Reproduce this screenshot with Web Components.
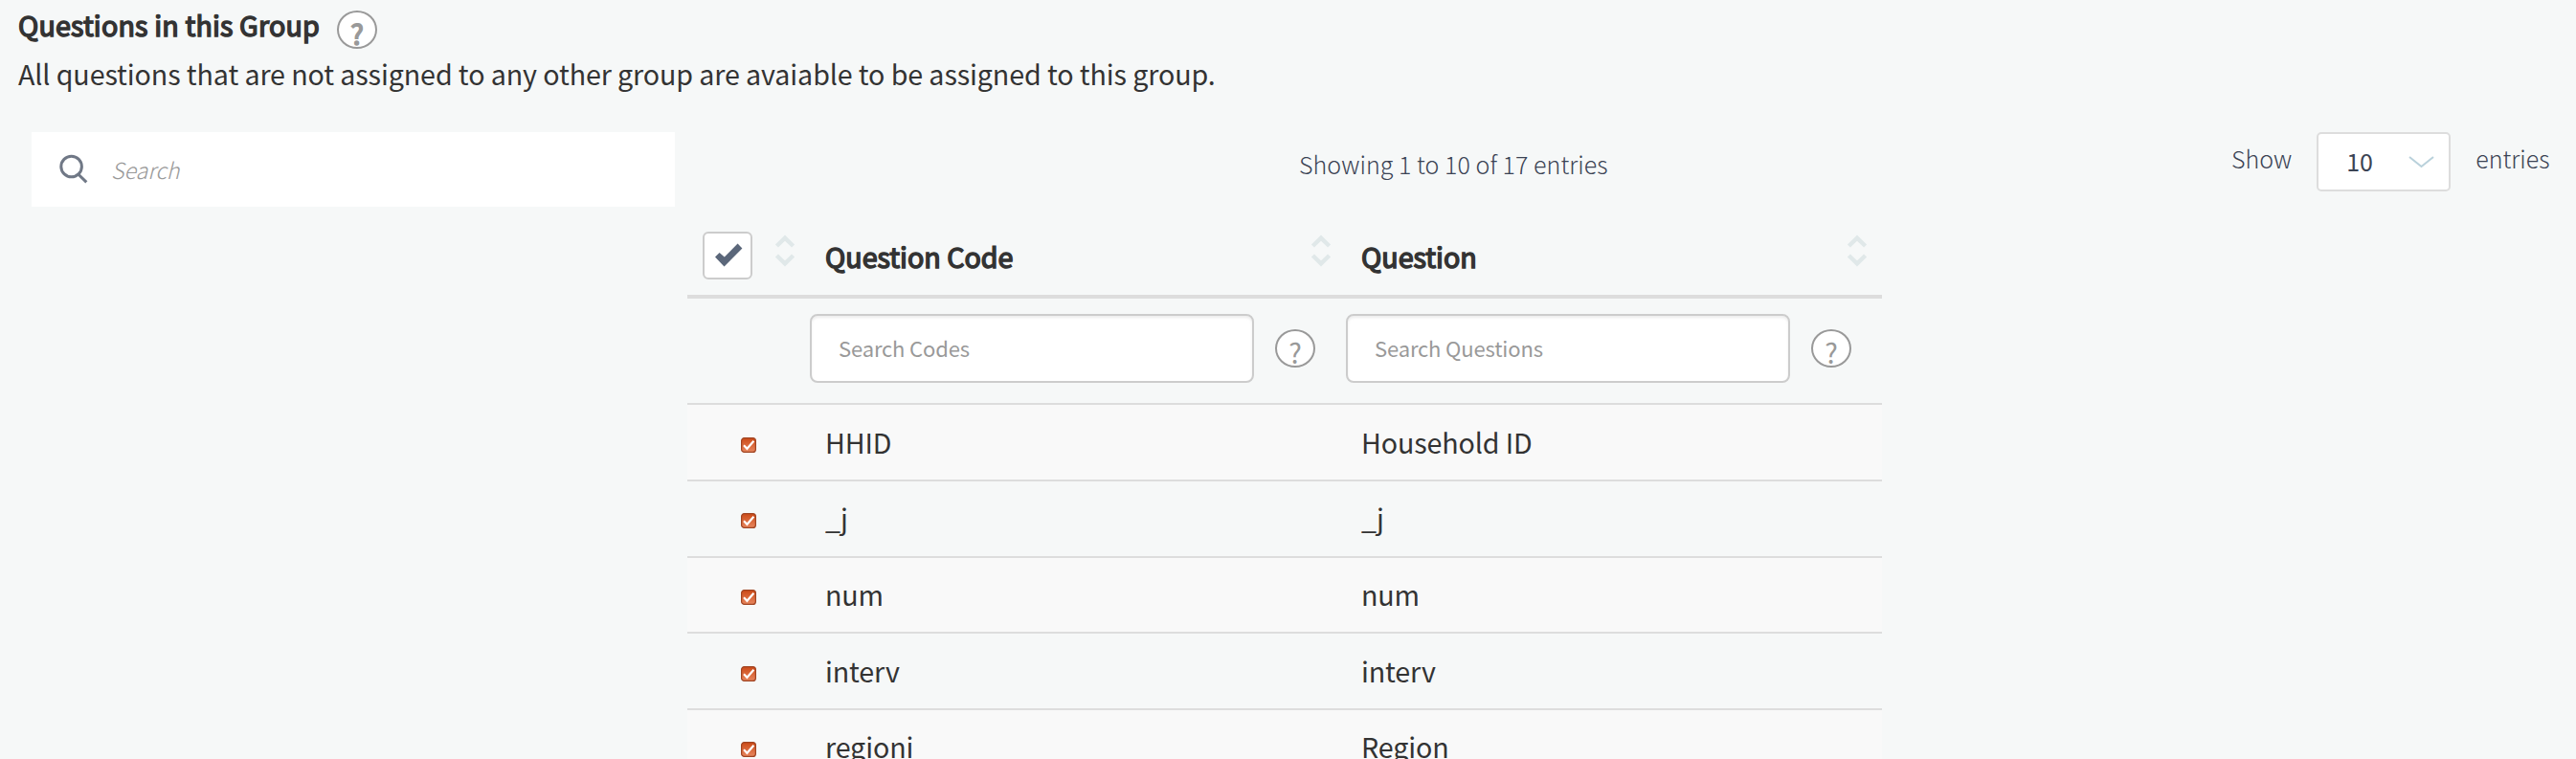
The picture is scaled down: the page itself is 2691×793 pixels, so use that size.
<!DOCTYPE html>
<html lang="en">
<head>
<meta charset="utf-8">
<title>Questions in this Group</title>
<style>
body { margin: 0; background: #f6f8f8; color: #333; font-family: "Noto Sans CJK SC", "Noto Sans", sans-serif; font-size: 28.65px; overflow: hidden; }
</style>
</head>
<body>
<group-editor></group-editor>
<script>
const define = (name, html, setup) => customElements.define(name, class extends HTMLElement {
  connectedCallback() {
    if (this.shadowRoot) return;
    const t = document.createElement('template');
    t.innerHTML = html;
    const root = this.attachShadow({ mode: 'open' });
    root.append(t.content.cloneNode(true));
    if (setup) setup(this, root);
  }
});

define('help-badge', `<style>
  :host { display: flex; box-sizing: border-box; flex: none; width: 42px; height: 40px; border: 2px solid #999; border-radius: 21px / 20px; background: #fff; color: #999; justify-content: center; }
  span { line-height: 40px; margin-top: 1.5px; }
  :host([strong]) span { -webkit-text-stroke: 1.5px #999; }
</style><span>?</span>`);

define('group-heading', `<style>
  :host { display: block; height: 138px; padding: 0 0 0 19px; box-sizing: border-box; }
  .title { display: flex; height: 56px; gap: 18px; }
  h3 { margin: 8px 0 0; font-size: inherit; font-weight: 400; line-height: 36px; letter-spacing: 0.16px; -webkit-text-stroke: 1.5px #333; }
  help-badge { margin-top: 11px; }
  p { margin: 0; line-height: 41px; letter-spacing: -0.1px; white-space: nowrap; }
</style><div class="title"><h3><slot></slot></h3><help-badge strong></help-badge></div><p><slot name="note"></slot></p>`);

define('search-box', `<style>
  :host { display: flex; box-sizing: border-box; width: 672px; height: 78px; padding-left: 28px; background: #fff; align-items: center; }
  svg { flex: none; margin-top: -3px; }
  span { margin: 0 0 1px 24px; font-size: 23.2px; font-weight: 300; font-style: italic; color: #999; line-height: 34px; }
</style><svg width="31" height="32" viewBox="0 0 31 32" fill="none" stroke="#707886" stroke-width="3"><circle cx="13.6" cy="14" r="10.8"/><path d="M21 22.2 29.3 30.4"/></svg><span><slot></slot></span>`);

define('page-length', `<style>
  :host { display: flex; font-size: 25px; font-weight: 300; color: #3b4354; }
  .w { line-height: 36px; padding-top: 9px; }
  .select { display: flex; box-sizing: border-box; width: 140px; height: 62px; margin: 0 26px 0 26px; padding: 0 15px 0 29px; border: 2px solid #ddd; border-radius: 5px; background: #fff; font-weight: 400; align-items: flex-start; justify-content: space-between; }
  b { font-weight: 400; line-height: 36px; padding-top: 10px; }
  svg { margin-top: 23px; }
</style><span class="w">Show</span><div class="select"><b><slot></slot></b><svg width="27" height="13" viewBox="0 0 27 13" fill="none" stroke="#b9d1db" stroke-width="2"><path d="M1 1 13.5 11 26 1"/></svg></div><span class="w">entries</span>`);

define('table-toolbar', `<style>
  :host { display: grid; grid-template-columns: 672px 1fr 360px; padding: 0 0 0 33px; height: 90px; }
  .info { font-size: 25px; font-weight: 300; color: #3b4354; line-height: 36px; padding: 15px 0 0 652px; letter-spacing: 0.06px; white-space: nowrap; }
</style><search-box>Search</search-box><div class="info">Showing 1 to 10 of 17 entries</div><page-length>10</page-length>`);

define('sort-arrows', `<style>
  :host { display: block; flex: none; width: 22px; height: 34px; }
  svg { display: block; }
</style><svg width="22" height="34" viewBox="0 0 22 34" fill="none" stroke="#e0e8e9" stroke-width="4.4"><path d="M2.4 12 11 3.6 19.6 12M2.4 22 11 30.4 19.6 22"/></svg>`);

define('check-toggle', `<style>
  :host { display: block; box-sizing: border-box; width: 52px; height: 50px; border: 2px solid #ccc; border-radius: 6px; background: #fff; }
  svg { display: block; margin: 10px 0 0 10px; }
</style><svg width="30" height="25" viewBox="0 0 30 25"><path fill="#5b677a" d="M1 14.5 5.6 10 10.8 14.6 24.6 .4 29.4 5.6 10.5 24.4Z"/></svg>`);

define('column-filter', `<style>
  :host { display: flex; }
  .box { box-sizing: border-box; width: 464px; height: 72px; border: 2px solid #ccc; border-radius: 8px; background: #fff; box-shadow: inset 0 2px 3px rgba(0,0,0,.075); padding: 0 0 0 28px; font-size: 22px; line-height: 67px; letter-spacing: -0.15px; color: #999; }
  help-badge { margin: 16px 0 0 22px; }
</style><div class="box"><slot></slot></div><help-badge></help-badge>`);

define('tick-box', `<style>
  :host { display: block; width: 16px; height: 16px; }
  svg { display: block; }
</style><svg width="16" height="16" viewBox="0 0 16 16"><defs><linearGradient id="g" x2="0" y2="1"><stop offset="0" stop-color="#cc4a17"/><stop offset="1" stop-color="#e8875f"/></linearGradient></defs><rect x=".6" y=".6" width="14.8" height="14.8" rx="3" fill="url(#g)" stroke="#a04422" stroke-width="1.2"/><path d="M3 8.3 6.4 11.8 13.4 3.8" fill="none" stroke="#fff" stroke-width="2.2"/></svg>`);

define('question-row', `<style>
  :host { display: grid; box-sizing: border-box; grid-template-columns: 144px 560px 544px; height: 80px; border-top: 2px solid #ddd; line-height: 41px; letter-spacing: -0.12px; }
  :host([odd]) { background: #f9f9f9; }
  :host([short]) { height: 79px; }
  tick-box { margin: 34px 0 0 56px; }
  span { padding-top: 18px; }
  :host([up]) span { padding-top: 17px; }
  :host([up]) tick-box { margin-top: 33px; }
</style><tick-box></tick-box><span class="c"></span><span class="q"></span>`, (el, root) => {
  root.querySelector('.c').textContent = el.getAttribute('code');
  root.querySelector('.q').textContent = el.getAttribute('label');
});

define('question-table', `<style>
  :host { display: block; width: 1248px; margin-left: 718px; }
  .head { display: grid; box-sizing: border-box; height: 84px; grid-template-columns: 128px 560px 560px; border-bottom: 4px solid #ddd; }
  .head > div { display: flex; justify-content: space-between; padding: 0 15px 0 16px; }
  check-toggle { margin-top: 14px; }
  sort-arrows { margin-top: 17px; }
  b { font-weight: 400; line-height: 41px; margin-top: 19px; -webkit-text-stroke: 1.5px #333; }
  .filters { display: grid; height: 109px; box-sizing: border-box; padding-top: 16px; grid-template-columns: 560px 560px; padding-left: 128px; }
</style>
<div class="head">
  <div><check-toggle></check-toggle><sort-arrows></sort-arrows></div>
  <div><b>Question Code</b><sort-arrows></sort-arrows></div>
  <div><b>Question</b><sort-arrows></sort-arrows></div>
</div>
<div class="filters"><column-filter>Search Codes</column-filter><column-filter>Search Questions</column-filter></div>
<slot></slot>`);

define('group-editor', `<style>
  :host { display: block; height: 793px; overflow: hidden; }
</style>
<group-heading>Questions in this Group<span slot="note">All questions that are not assigned to any other group are avaiable to be assigned to this group.</span></group-heading>
<table-toolbar></table-toolbar>
<question-table>
  <question-row odd code="HHID" label="Household ID"></question-row>
  <question-row up code="_j" label="_j"></question-row>
  <question-row odd short up code="num" label="num"></question-row>
  <question-row code="interv" label="interv"></question-row>
  <question-row odd up code="regioni" label="Region"></question-row>
</question-table>`);
</script>
</body>
</html>
